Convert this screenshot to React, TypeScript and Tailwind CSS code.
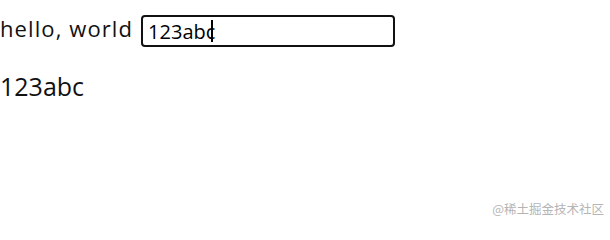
import React from "react";

export default function App() {
  return (
    <div className="relative w-[610px] h-[223px] bg-white text-black overflow-hidden" style={{ fontFamily: '"Open Sans", "Noto Sans", sans-serif' }}>
      <div className="flex items-start pt-[15px]">
        <span className="text-[22px] leading-[26px] tracking-[1.1px] whitespace-nowrap text-[#111]">hello, world</span>
        <div className="relative ml-[8px]">
          <input
            readOnly
            value="123abc"
            className="w-[254px] h-[32px] border-2 border-[#111] rounded-[4px] px-[5px] text-[20px] leading-[28px] text-black outline-none caret-transparent"
            style={{ fontFamily: '"Open Sans", "Noto Sans", sans-serif' }}
          />
          <span className="absolute left-[70px] top-[5px] w-[2px] h-[22px] bg-black" />
        </div>
      </div>
      <div className="mt-[22px] text-[25px] leading-[34px] text-[#111]">123abc</div>
      <div
        className="absolute right-[6px] bottom-[6px] text-[12.5px] leading-[16px] text-[#b5b5b5]"
        style={{ fontFamily: '"Noto Sans CJK SC", "Noto Sans", sans-serif' }}
      >
        @稀土掘金技术社区
      </div>
    </div>
  );
}
